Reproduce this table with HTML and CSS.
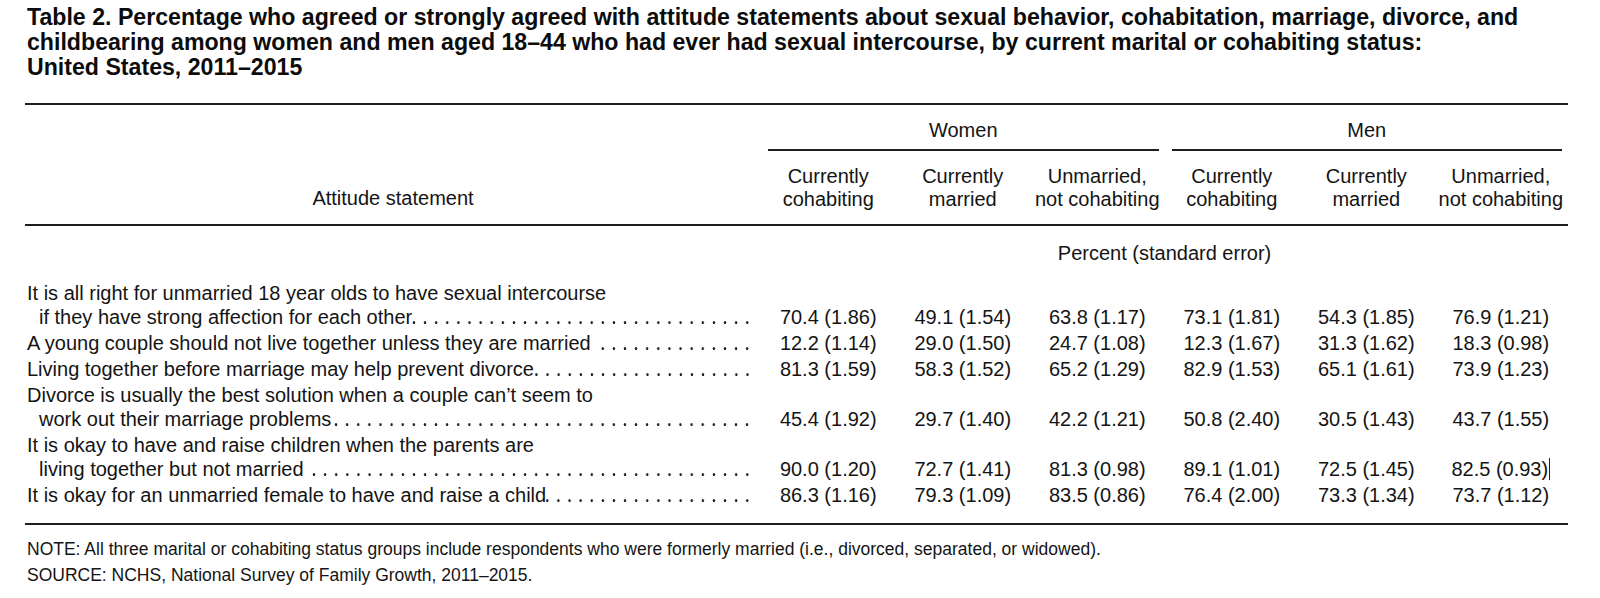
FILE: index.html
```html
<!DOCTYPE html>
<html lang="en">
<head>
<meta charset="utf-8">
<title>Table 2</title>
<link rel="stylesheet" href="styles.css">
</head>
<body>
<h1 class="title">Table 2. Percentage who agreed or strongly agreed with attitude statements about sexual behavior, cohabitation, marriage, divorce, and<br>childbearing among women and men aged 18–44 who had ever had sexual intercourse, by current marital or cohabiting status:<br>United States, 2011–2015</h1>
<table class="data">
  <colgroup>
    <col class="c-stub">
    <col class="c-val"><col class="c-val"><col class="c-val">
    <col class="c-val"><col class="c-val"><col class="c-val">
  </colgroup>
  <thead>
    <tr>
      <th rowspan="2" class="stub-head">Attitude statement</th>
      <th colspan="3" class="spanner"><div class="spanner-label">Women</div></th>
      <th colspan="3" class="spanner"><div class="spanner-label">Men</div></th>
    </tr>
    <tr class="col-heads">
      <th>Currently<br>cohabiting</th>
      <th>Currently<br>married</th>
      <th>Unmarried,<br>not cohabiting</th>
      <th>Currently<br>cohabiting</th>
      <th>Currently<br>married</th>
      <th>Unmarried,<br>not cohabiting</th>
    </tr>
  </thead>
  <tbody>
    <tr class="unit-row">
      <td class="unit-stub"></td>
      <td colspan="6" class="unit">Percent (standard error)</td>
    </tr>
    <tr>
      <td class="stub">
        <div class="line">It is all right for unmarried 18 year olds to have sexual intercourse</div>
        <div class="line cont"><span class="txt">if they have strong affection for each other</span><span class="leader"></span></div>
      </td>
      <td>70.4 (1.86)</td><td>49.1 (1.54)</td><td>63.8 (1.17)</td><td>73.1 (1.81)</td><td>54.3 (1.85)</td><td>76.9 (1.21)</td>
    </tr>
    <tr>
      <td class="stub">
        <div class="line"><span class="txt">A young couple should not live together unless they are married </span><span class="leader"></span></div>
      </td>
      <td>12.2 (1.14)</td><td>29.0 (1.50)</td><td>24.7 (1.08)</td><td>12.3 (1.67)</td><td>31.3 (1.62)</td><td>18.3 (0.98)</td>
    </tr>
    <tr>
      <td class="stub">
        <div class="line"><span class="txt">Living together before marriage may help prevent divorce</span><span class="leader"></span></div>
      </td>
      <td>81.3 (1.59)</td><td>58.3 (1.52)</td><td>65.2 (1.29)</td><td>82.9 (1.53)</td><td>65.1 (1.61)</td><td>73.9 (1.23)</td>
    </tr>
    <tr>
      <td class="stub">
        <div class="line">Divorce is usually the best solution when a couple can’t seem to</div>
        <div class="line cont"><span class="txt">work out their marriage problems</span><span class="leader"></span></div>
      </td>
      <td>45.4 (1.92)</td><td>29.7 (1.40)</td><td>42.2 (1.21)</td><td>50.8 (2.40)</td><td>30.5 (1.43)</td><td>43.7 (1.55)</td>
    </tr>
    <tr>
      <td class="stub">
        <div class="line">It is okay to have and raise children when the parents are</div>
        <div class="line cont"><span class="txt">living together but not married </span><span class="leader"></span></div>
      </td>
      <td>90.0 (1.20)</td><td>72.7 (1.41)</td><td>81.3 (0.98)</td><td>89.1 (1.01)</td><td>72.5 (1.45)</td><td>82.5 (0.93)<span class="cursor"></span></td>
    </tr>
    <tr class="last">
      <td class="stub">
        <div class="line"><span class="txt">It is okay for an unmarried female to have and raise a child</span><span class="leader"></span></div>
      </td>
      <td>86.3 (1.16)</td><td>79.3 (1.09)</td><td>83.5 (0.86)</td><td>76.4 (2.00)</td><td>73.3 (1.34)</td><td>73.7 (1.12)</td>
    </tr>
  </tbody>
</table>
<div class="notes">
  <p>NOTE: All three marital or cohabiting status groups include respondents who were formerly married (i.e., divorced, separated, or widowed).</p>
  <p>SOURCE: NCHS, National Survey of Family Growth, 2011–2015.</p>
</div>
</body>
</html>
```
FILE: styles.css
```css
html, body {
  background: #ffffff;
}
body {
  margin: 0;
  padding: 5px 32px 0 25px;
  font-family: "Liberation Sans", Arial, Helvetica, sans-serif;
  color: #141414;
}
.title {
  margin: 0 0 23px 2px;
  font-size: 23.15px;
  line-height: 25px;
  font-weight: bold;
  color: #0c0c0c;
  white-space: nowrap;
}
.data {
  width: 1543px;
  border-collapse: collapse;
  table-layout: fixed;
  font-size: 20px;
  border-top: 2px solid #1e1e1e;
  border-bottom: 2px solid #1e1e1e;
}
.c-stub { width: 736px; }
.c-val { width: 134.5px; }
.data th {
  font-weight: normal;
  padding: 0;
}
.data th.stub-head {
  vertical-align: bottom;
  text-align: center;
  line-height: 23px;
  padding-bottom: 14px;
  border-bottom: 2px solid #1e1e1e;
}
.spanner {
  vertical-align: top;
}
.spanner-label {
  margin: 0 6px 0 7px;
  padding: 13px 0 7px;
  line-height: 24px;
  text-align: center;
  border-bottom: 2px solid #1e1e1e;
}
.data .col-heads th {
  text-align: center;
  line-height: 23px;
  padding: 14px 0 13px;
  border-bottom: 2px solid #1e1e1e;
  white-space: nowrap;
}
.data tbody td {
  line-height: 24px;
  padding: 1px 0;
  text-align: center;
  vertical-align: bottom;
  white-space: nowrap;
}
.data tbody .unit-row td {
  padding: 15px 0 15px;
}
.data tbody td.stub {
  text-align: left;
  padding-left: 2px;
  padding-right: 8px;
  white-space: normal;
}
.data tbody tr.last td {
  padding-bottom: 16px;
}
.line {
  display: flex;
  white-space: nowrap;
}
.line.cont {
  padding-left: 12px;
}
.txt {
  flex: none;
  white-space: pre;
}
.leader {
  flex: 1 1 auto;
  min-width: 0;
  height: 24px;
  background-image: radial-gradient(circle 1.35px at 5.55px 17.6px, #1e1e1e 0, #1e1e1e 1.1px, rgba(30, 30, 30, 0) 1.5px);
  background-size: 11.12px 24px;
  background-repeat: repeat-x;
  background-position: right 0 top 0;
}
.cursor {
  display: inline-block;
  width: 1px;
  height: 22px;
  margin-left: 1px;
  background: #222;
  vertical-align: -4px;
}
.notes {
  margin-top: 12px;
  font-size: 17.5px;
  line-height: 25.5px;
  color: #141414;
}
.notes p {
  margin: 0 0 0 2px;
}
```
